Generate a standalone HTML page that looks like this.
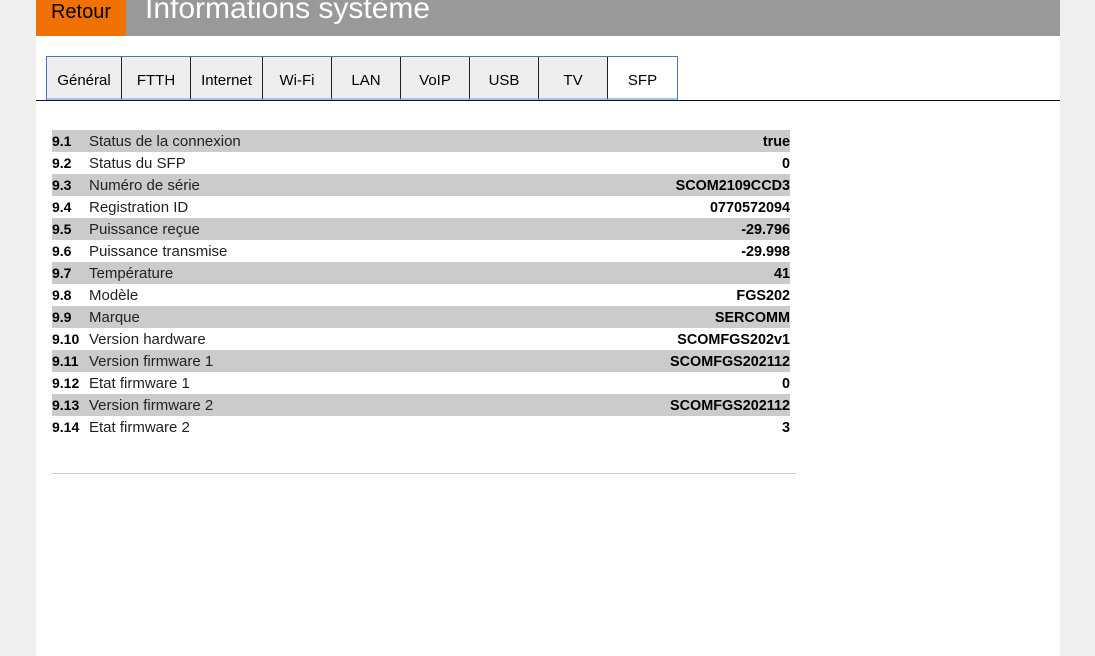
<!DOCTYPE html>
<html><head><meta charset="utf-8"><style>
*{margin:0;padding:0;box-sizing:border-box}
body{width:1095px;height:656px;background:#efefef;font-family:"Liberation Sans",sans-serif;overflow:hidden;position:relative}
.wrap{position:absolute;left:36px;top:0;width:1024px;height:656px;background:#fff}
.hdr{position:absolute;left:0;top:0;width:1024px;height:36px;background:#999}
.ret{position:absolute;left:0;top:0;width:90px;height:36px;background:#f07000;color:#000;font-size:20px;text-align:center;line-height:24px}
.ttl{position:absolute;left:109px;top:-7px;color:#fff;font-size:30px;line-height:32px}
.tabs{position:absolute;left:10px;top:56px;height:44px;border:1px solid #4a74c4;border-bottom:none;display:flex}
.tab{height:43px;background:#eee;border-right:1px solid #222;font-size:15px;text-align:center;line-height:47px;border-bottom:2px solid #a3c2f2}
.tab:last-child{border-right:none;background:#fff}
.line{position:absolute;left:0;top:100px;width:1024px;height:1px;background:#111}
.tbl{position:absolute;left:16px;top:130px;width:738px;font-size:15px}
.r{display:flex;align-items:baseline;height:22px;line-height:22px;color:#222;overflow:hidden}
.r:nth-child(odd){background:#cbcbcb}
.n{font-weight:bold;width:37px;color:#000;font-size:14px}
.l{flex:1}
.v{font-weight:bold;color:#000;font-size:14.4px}
.hr{position:absolute;left:16px;top:473px;width:744px;height:1px;background:#ccc}
</style></head><body>
<div class="wrap">
<div class="hdr"><div class="ret">Retour</div><div class="ttl">Informations système</div></div>
<div class="tabs">
<div class="tab" style="width:75px">Général</div>
<div class="tab" style="width:69px">FTTH</div>
<div class="tab" style="width:72px">Internet</div>
<div class="tab" style="width:69px">Wi-Fi</div>
<div class="tab" style="width:69px">LAN</div>
<div class="tab" style="width:69px">VoIP</div>
<div class="tab" style="width:69px">USB</div>
<div class="tab" style="width:69px">TV</div>
<div class="tab" style="width:69px">SFP</div>
</div>
<div class="line"></div>
<div class="tbl">
<div class="r"><span class="n">9.1</span><span class="l">Status de la connexion</span><span class="v">true</span></div>
<div class="r"><span class="n">9.2</span><span class="l">Status du SFP</span><span class="v">0</span></div>
<div class="r"><span class="n">9.3</span><span class="l">Numéro de série</span><span class="v">SCOM2109CCD3</span></div>
<div class="r"><span class="n">9.4</span><span class="l">Registration ID</span><span class="v">0770572094</span></div>
<div class="r"><span class="n">9.5</span><span class="l">Puissance reçue</span><span class="v">-29.796</span></div>
<div class="r"><span class="n">9.6</span><span class="l">Puissance transmise</span><span class="v">-29.998</span></div>
<div class="r"><span class="n">9.7</span><span class="l">Température</span><span class="v">41</span></div>
<div class="r"><span class="n">9.8</span><span class="l">Modèle</span><span class="v">FGS202</span></div>
<div class="r"><span class="n">9.9</span><span class="l">Marque</span><span class="v">SERCOMM</span></div>
<div class="r"><span class="n">9.10</span><span class="l">Version hardware</span><span class="v">SCOMFGS202v1</span></div>
<div class="r"><span class="n">9.11</span><span class="l">Version firmware 1</span><span class="v">SCOMFGS202112</span></div>
<div class="r"><span class="n">9.12</span><span class="l">Etat firmware 1</span><span class="v">0</span></div>
<div class="r"><span class="n">9.13</span><span class="l">Version firmware 2</span><span class="v">SCOMFGS202112</span></div>
<div class="r"><span class="n">9.14</span><span class="l">Etat firmware 2</span><span class="v">3</span></div>
</div>
<div class="hr"></div>
</div>
</body></html>
